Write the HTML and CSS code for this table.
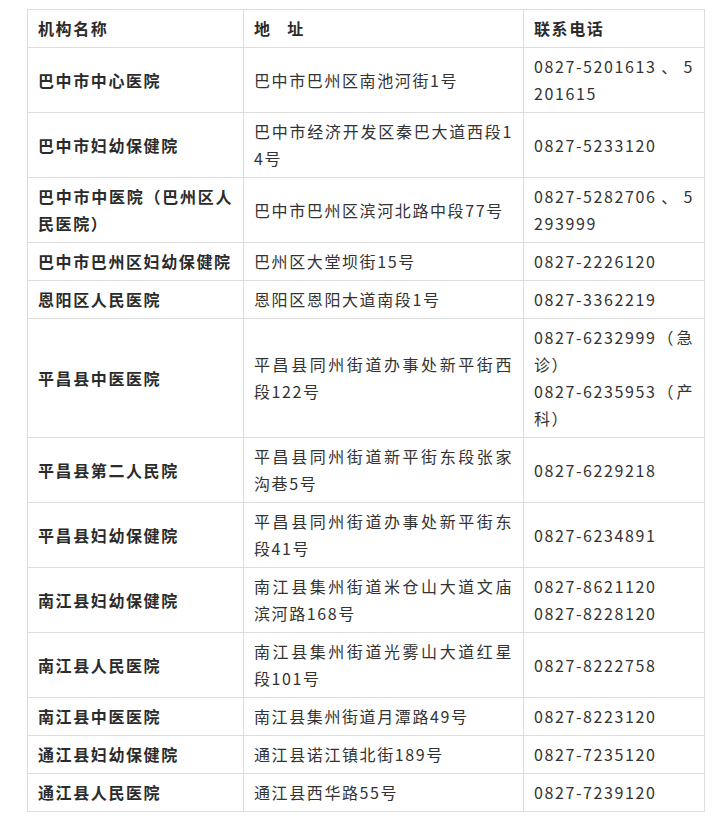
FILE: index.html
```html
<!DOCTYPE html>
<html lang="zh-CN">
<head>
<meta charset="utf-8">
<title>机构名称</title>
<link rel="stylesheet" href="styles.css">
</head>
<body>
<div class="page">
<table class="hosp">
<colgroup>
<col class="c-name">
<col class="c-addr">
<col class="c-tel">
</colgroup>
<thead>
<tr><th>机构名称</th><th>地&nbsp;&nbsp;&nbsp;址</th><th>联系电话</th></tr>
</thead>
<tbody>
<tr><th>巴中市中心医院</th><td>巴中市巴州区南池河街1号</td><td>0827-5201613、5201615</td></tr>
<tr><th>巴中市妇幼保健院</th><td>巴中市经济开发区秦巴大道西段14号</td><td>0827-5233120</td></tr>
<tr><th>巴中市中医院（巴州区人民医院）</th><td>巴中市巴州区滨河北路中段77号</td><td>0827-5282706、5293999</td></tr>
<tr><th>巴中市巴州区妇幼保健院</th><td>巴州区大堂坝街15号</td><td>0827-2226120</td></tr>
<tr><th>恩阳区人民医院</th><td>恩阳区恩阳大道南段1号</td><td>0827-3362219</td></tr>
<tr><th>平昌县中医医院</th><td>平昌县同州街道办事处新平街西段122号</td><td>0827-6232999（急诊）<br>0827-6235953（产科）</td></tr>
<tr><th>平昌县第二人民院</th><td>平昌县同州街道新平街东段张家沟巷5号</td><td>0827-6229218</td></tr>
<tr><th>平昌县妇幼保健院</th><td>平昌县同州街道办事处新平街东段41号</td><td>0827-6234891</td></tr>
<tr><th>南江县妇幼保健院</th><td>南江县集州街道米仓山大道文庙滨河路168号</td><td>0827-8621120<br>0827-8228120</td></tr>
<tr><th>南江县人民医院</th><td>南江县集州街道光雾山大道红星段101号</td><td>0827-8222758</td></tr>
<tr><th>南江县中医医院</th><td>南江县集州街道月潭路49号</td><td>0827-8223120</td></tr>
<tr><th>通江县妇幼保健院</th><td>通江县诺江镇北街189号</td><td>0827-7235120</td></tr>
<tr><th>通江县人民医院</th><td>通江县西华路55号</td><td>0827-7239120</td></tr>
</tbody>
</table>
</div>
</body>
</html>
```

FILE: styles.css
```css
html, body {
  margin: 0;
  padding: 0;
  background: #fff;
}

.page {
  padding: 9px 0 16px 27px;
}

.hosp {
  border-collapse: collapse;
  table-layout: fixed;
  width: 677px;
  font-family: "Noto Sans CJK SC", "Noto Sans", sans-serif;
  font-size: 16px;
  line-height: 27px;
  color: #333;
  letter-spacing: 1.6px;
}

.c-name { width: 216px; }
.c-addr { width: 280px; }
.c-tel { width: 181px; }

.hosp th,
.hosp td {
  border: 1px solid #ddd;
  padding: 5px 10px;
  vertical-align: middle;
  text-align: justify;
  word-break: break-all;
}

.hosp th {
  font-weight: 700;
  color: #2b2b2b;
}

.hosp td {
  font-weight: 400;
}
```
